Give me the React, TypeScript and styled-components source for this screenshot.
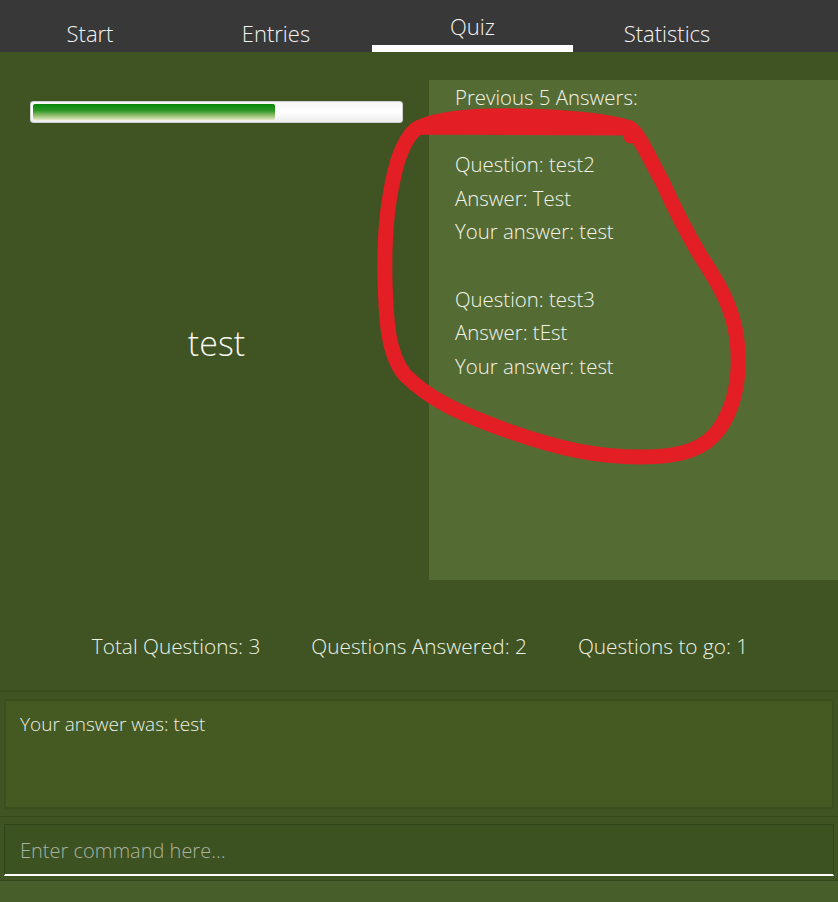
import React from "react";
import styled, { createGlobalStyle } from "styled-components";

const Global = createGlobalStyle`
  html, body { margin: 0; padding: 0; }
  body {
    background: #475d2a;
    font-family: "Open Sans", "Liberation Sans", sans-serif;
    font-weight: 300;
    color: #f2f4ec;
    overflow: hidden;
  }
`;

const Page = styled.div`
  width: 838px;
  height: 902px;
  display: flex;
  flex-direction: column;
  position: relative;
`;

const TabBar = styled.div`
  height: 52px;
  background: #383838;
  display: flex;
  flex-shrink: 0;
`;

const Tab = styled.div<{ $w: number; $active?: boolean }>`
  width: ${(p) => p.$w}px;
  height: 52px;
  box-sizing: border-box;
  display: flex;
  justify-content: center;
  align-items: ${(p) => (p.$active ? "flex-start" : "flex-end")};
  padding-top: ${(p) => (p.$active ? "11px" : "0")};
  padding-bottom: ${(p) => (p.$active ? "0" : "4px")};
  font-size: 22px;
  color: #f4f4f4;
  border-bottom: ${(p) => (p.$active ? "7px solid #ffffff" : "none")};
  line-height: 30px;
`;

const Main = styled.div`
  background: #3f5422;
  display: flex;
  flex-direction: column;
  height: 638px;
  border-bottom: 2px solid #374b1c;
  flex-shrink: 0;
`;

const Content = styled.div`
  display: grid;
  grid-template-columns: 429px 1fr;
  height: 528px;
`;

const LeftCol = styled.div`
  display: flex;
  flex-direction: column;
  align-items: center;
`;

const ProgressTrack = styled.div`
  margin-top: 49px;
  margin-left: 3px;
  width: 373px;
  height: 22px;
  box-sizing: border-box;
  border-radius: 3px;
  border: 1px solid #cfcfcf;
  background: linear-gradient(#f6f6f6, #ffffff 50%, #ececec);
  padding: 2px;
  display: flex;
`;

const ProgressFill = styled.div`
  height: 16px;
  border-radius: 2px;
  background: linear-gradient(#08870b 0%, #2b9622 40%, #8dbb6a 70%, #e2e8c4 100%);
`;

const Prompt = styled.div`
  margin-top: 197px;
  font-size: 34px;
  color: #f6f6f2;
  margin-left: 4px;
`;

const Panel = styled.div`
  margin-top: 28px;
  height: 500px;
  background: #546c34;
  padding: 1px 0 0 26px;
  box-sizing: border-box;
  font-size: 20.4px;
  line-height: 33.6px;
  color: #f4f4ec;
`;

const Line = styled.div`
  min-height: 33.6px;
`;

const StatsRow = styled.div`
  flex: 1;
  display: flex;
  justify-content: center;
  align-items: center;
  gap: 51px;
  padding-top: 22px;
  padding-left: 2px;
  font-size: 20.8px;
  color: #eef2e6;
`;

const Section = styled.div<{ $h: number; $bottom: string }>`
  height: ${(p) => p.$h}px;
  flex-shrink: 0;
  background: #3f5422;
  border-bottom: 1px solid ${(p) => p.$bottom};
  padding: 7px 4px;
  box-sizing: border-box;
`;

const ResultBox = styled.div`
  height: 110px;
  box-sizing: border-box;
  border: 2px solid #3a4e1e;
  background: #445a22;
  padding: 10px 14px;
  font-size: 19px;
  color: #eef0e6;
`;

const CommandBox = styled.div`
  height: 52px;
  box-sizing: border-box;
  border: 1px solid #2f4218;
  border-bottom: 2px solid #ffffff;
  background: #3d5221;
  padding: 0 15px;
  display: flex;
  align-items: center;
`;

const CommandInput = styled.input`
  flex: 1;
  background: transparent;
  border: none;
  outline: none;
  font-family: inherit;
  font-weight: 300;
  font-size: 20px;
  color: #eef0e6;
  padding: 0;
  margin-top: 2px;
  &::placeholder { color: #a9b3a0; }
`;

const Footer = styled.div`
  flex: 1;
  background: #475d2a;
`;

const Annotation = styled.svg`
  position: absolute;
  left: 0;
  top: 0;
  pointer-events: none;
`;

const history = [
  "Previous 5 Answers:",
  "",
  "Question: test2",
  "Answer: Test",
  "Your answer: test",
  "",
  "Question: test3",
  "Answer: tEst",
  "Your answer: test",
];

export default function App() {
  const progress = 2 / 3;
  return (
    <Page>
      <Global />
      <TabBar>
        <Tab $w={180}>Start</Tab>
        <Tab $w={192}>Entries</Tab>
        <Tab $w={201} $active>Quiz</Tab>
        <Tab $w={188}>Statistics</Tab>
      </TabBar>
      <Main>
        <Content>
          <LeftCol>
            <ProgressTrack>
              <ProgressFill style={{ width: `${progress * 100 - 0.7}%` }} />
            </ProgressTrack>
            <Prompt>test</Prompt>
          </LeftCol>
          <Panel>
            {history.map((l, i) => (
              <Line key={i}>{l}</Line>
            ))}
          </Panel>
        </Content>
        <StatsRow>
          <span>Total Questions: 3</span>
          <span>Questions Answered: 2</span>
          <span>Questions to go: 1</span>
        </StatsRow>
      </Main>
      <Section $h={125} $bottom="#34471a">
        <ResultBox>Your answer was: test</ResultBox>
      </Section>
      <Section $h={64} $bottom="#34471a">
        <CommandBox>
          <CommandInput placeholder="Enter command here..." />
        </CommandBox>
      </Section>
      <Footer />
      <Annotation width={838} height={902} viewBox="0 0 838 902">
        <path
          d="M420 127 C 440 118, 480 115, 520 116 C 570 117, 605 120, 630 128 L 631 136
             M 630 128 C 640 135, 650 160, 663 183 C 675 210, 687 233, 700 255
             C 715 278, 733 305, 737 340 C 741 375, 735 405, 720 428
             C 705 450, 680 457, 640 457 C 600 457, 560 450, 500 428
             C 460 413, 430 400, 405 375 C 388 355, 386 320, 385 280
             C 384 230, 388 195, 398 160 C 405 140, 412 130, 420 127 Z"
          fill="none"
          stroke="#e31e24"
          strokeWidth={15}
          strokeLinecap="round"
          strokeLinejoin="round"
        />
      </Annotation>
    </Page>
  );
}
